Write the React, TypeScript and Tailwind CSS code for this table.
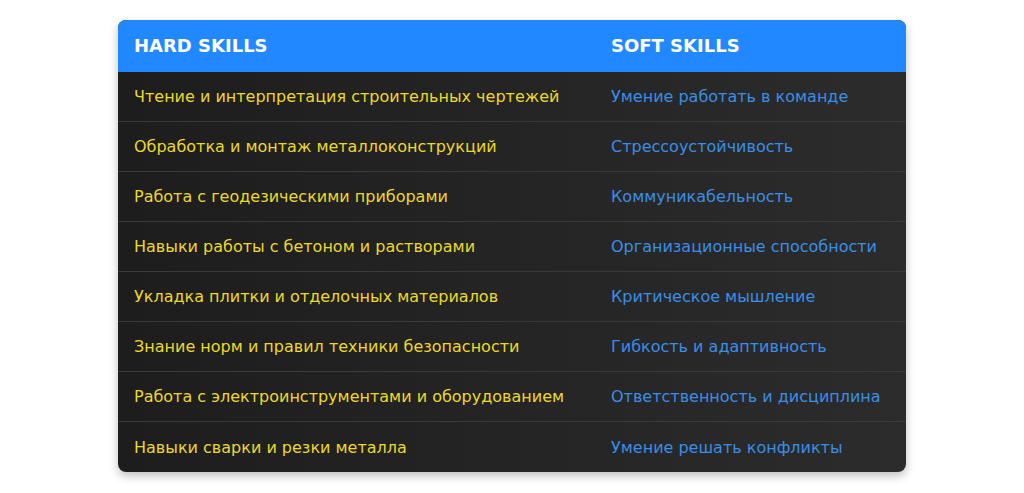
const rows: [string, string][] = [
  ["Чтение и интерпретация строительных чертежей", "Умение работать в команде"],
  ["Обработка и монтаж металлоконструкций", "Стрессоустойчивость"],
  ["Работа с геодезическими приборами", "Коммуникабельность"],
  ["Навыки работы с бетоном и растворами", "Организационные способности"],
  ["Укладка плитки и отделочных материалов", "Критическое мышление"],
  ["Знание норм и правил техники безопасности", "Гибкость и адаптивность"],
  ["Работа с электроинструментами и оборудованием", "Ответственность и дисциплина"],
  ["Навыки сварки и резки металла", "Умение решать конфликты"],
];

export default function App() {
  return (
    <div className="min-h-[493px] bg-white pt-5 font-['DejaVu_Sans',sans-serif]">
      <div className="mx-auto w-[788px] overflow-hidden rounded-lg bg-gradient-to-r from-[#1d1d1d] to-[#2c2c2c] shadow-[0_4px_10px_rgba(0,0,0,0.25)]">
        <div className="flex h-[52px] items-center bg-[#2288ff] text-lg font-bold text-white">
          <div className="w-[477px] px-4">HARD SKILLS</div>
          <div className="flex-1 px-4">SOFT SKILLS</div>
        </div>
        {rows.map(([hard, soft], i) => (
          <div
            key={i}
            className={
              "flex h-[50px] items-center pt-px text-base " +
              (i < rows.length - 1 ? "border-b border-[#3a3a3a]" : "")
            }
          >
            <div className="w-[477px] px-4 text-[#ecd82c]">{hard}</div>
            <div className="flex-1 px-4 text-[#3a8ee6]">{soft}</div>
          </div>
        ))}
      </div>
    </div>
  );
}
